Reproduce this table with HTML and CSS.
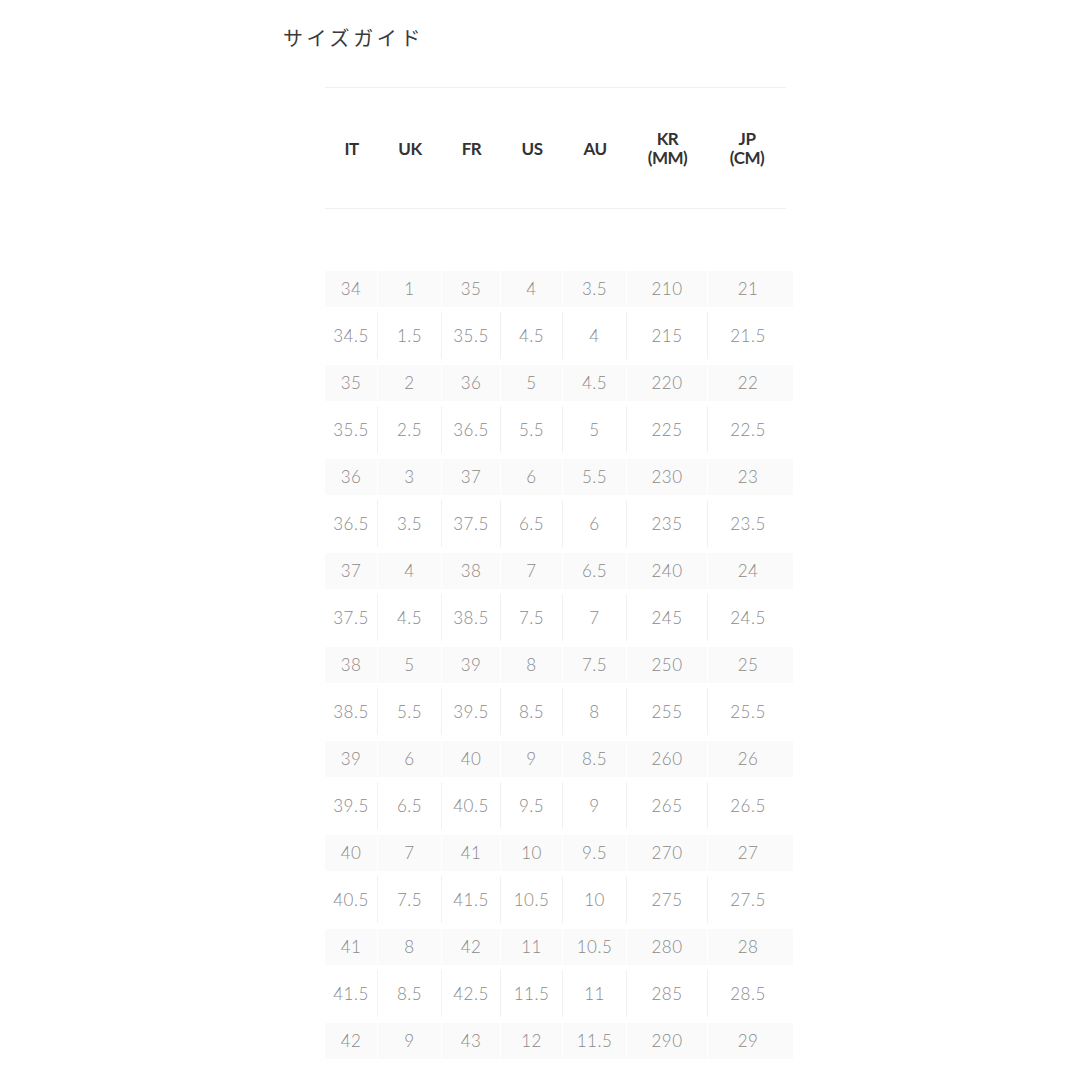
FILE: index.html
```html
<!DOCTYPE html>
<html lang="ja">
<head>
<meta charset="utf-8">
<title>サイズガイド</title>
<link rel="stylesheet" href="styles.css">
</head>
<body>
<div class="page">
  <h1 class="title">サイズガイド</h1>
  <div class="tables">
    <table class="head">
      <tr>
        <th>IT</th><th>UK</th><th>FR</th><th>US</th><th>AU</th><th>KR<br>(MM)</th><th>JP<br>(CM)</th>
      </tr>
    </table>
    <table class="body">
      <tr><td>34</td><td>1</td><td>35</td><td>4</td><td>3.5</td><td>210</td><td>21</td></tr>
      <tr><td>34.5</td><td>1.5</td><td>35.5</td><td>4.5</td><td>4</td><td>215</td><td>21.5</td></tr>
      <tr><td>35</td><td>2</td><td>36</td><td>5</td><td>4.5</td><td>220</td><td>22</td></tr>
      <tr><td>35.5</td><td>2.5</td><td>36.5</td><td>5.5</td><td>5</td><td>225</td><td>22.5</td></tr>
      <tr><td>36</td><td>3</td><td>37</td><td>6</td><td>5.5</td><td>230</td><td>23</td></tr>
      <tr><td>36.5</td><td>3.5</td><td>37.5</td><td>6.5</td><td>6</td><td>235</td><td>23.5</td></tr>
      <tr><td>37</td><td>4</td><td>38</td><td>7</td><td>6.5</td><td>240</td><td>24</td></tr>
      <tr><td>37.5</td><td>4.5</td><td>38.5</td><td>7.5</td><td>7</td><td>245</td><td>24.5</td></tr>
      <tr><td>38</td><td>5</td><td>39</td><td>8</td><td>7.5</td><td>250</td><td>25</td></tr>
      <tr><td>38.5</td><td>5.5</td><td>39.5</td><td>8.5</td><td>8</td><td>255</td><td>25.5</td></tr>
      <tr><td>39</td><td>6</td><td>40</td><td>9</td><td>8.5</td><td>260</td><td>26</td></tr>
      <tr><td>39.5</td><td>6.5</td><td>40.5</td><td>9.5</td><td>9</td><td>265</td><td>26.5</td></tr>
      <tr><td>40</td><td>7</td><td>41</td><td>10</td><td>9.5</td><td>270</td><td>27</td></tr>
      <tr><td>40.5</td><td>7.5</td><td>41.5</td><td>10.5</td><td>10</td><td>275</td><td>27.5</td></tr>
      <tr><td>41</td><td>8</td><td>42</td><td>11</td><td>10.5</td><td>280</td><td>28</td></tr>
      <tr><td>41.5</td><td>8.5</td><td>42.5</td><td>11.5</td><td>11</td><td>285</td><td>28.5</td></tr>
      <tr><td>42</td><td>9</td><td>43</td><td>12</td><td>11.5</td><td>290</td><td>29</td></tr>
    </table>
  </div>
</div>
</body>
</html>
```
FILE: styles.css
```css
html, body {
  margin: 0;
  padding: 0;
  background: #ffffff;
}

.page {
  padding: 24px 0 0 283px;
}

.title {
  margin: 0;
  font-family: "Noto Sans CJK JP", "Noto Sans", sans-serif;
  font-weight: 400;
  font-size: 20px;
  line-height: 28px;
  letter-spacing: 3.6px;
  color: #3a3a3a;
}

.tables {
  padding-left: 42px;
  margin-top: 35px;
}

table {
  border-collapse: separate;
  border-spacing: 0;
  table-layout: fixed;
}

.head {
  width: 461px;
  border-top: 1px solid #f0f0f0;
  border-bottom: 1px solid #f0f0f0;
}

.head th {
  height: 120px;
  padding: 0;
  font-family: Lato, "Open Sans", sans-serif;
  font-weight: 700;
  font-size: 17px;
  line-height: 19px;
  letter-spacing: -0.5px;
  color: #333333;
  text-align: center;
  vertical-align: middle;
}

.body {
  width: 468px;
  margin-top: 56px;
}

.head th:nth-child(1), .body td:nth-child(1) { width: 53px; }
.head th:nth-child(2), .body td:nth-child(2) { width: 64px; }
.head th:nth-child(3), .body td:nth-child(3) { width: 59px; }
.head th:nth-child(4), .body td:nth-child(4) { width: 62px; }
.head th:nth-child(5), .body td:nth-child(5) { width: 64px; }
.head th:nth-child(6), .body td:nth-child(6) { width: 81px; }
.head th:nth-child(7) { width: 78px; }
.body td:nth-child(7) { width: 85px; padding-right: 5px; }

.body td {
  height: 47px;
  padding: 0;
  box-sizing: border-box;
  font-family: Lato, "Open Sans", sans-serif;
  font-weight: 300;
  font-size: 17px;
  letter-spacing: 0.5px;
  color: #8a8a8a;
  text-align: center;
  vertical-align: middle;
  border-right: 1px solid #f1f1f1;
}

.body td:last-child {
  border-right: none;
}

.body tr:nth-child(odd) td {
  background: linear-gradient(to bottom, transparent 6px, #fafafa 6px, #fafafa 42px, transparent 42px);
  border-right-color: #ffffff;
}

.body tr:nth-child(odd) td:last-child {
  border-right: none;
}
```
